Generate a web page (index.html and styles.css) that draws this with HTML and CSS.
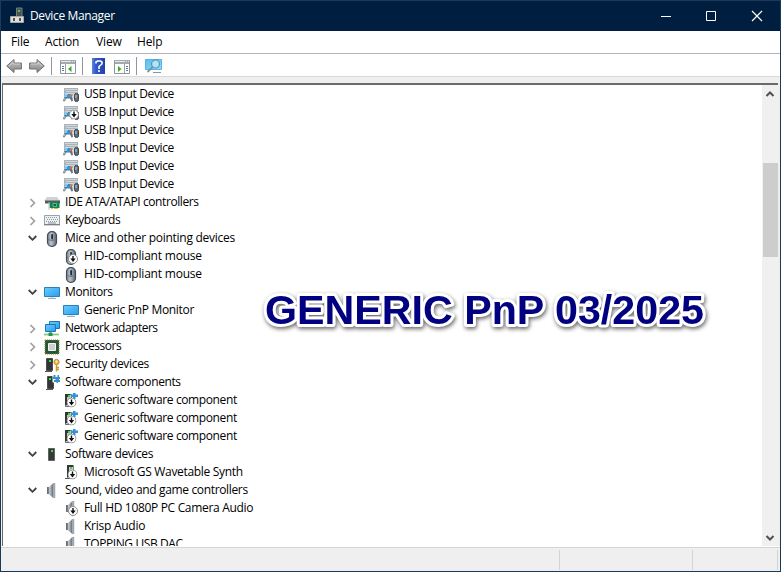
FILE: index.html
```html
<!DOCTYPE html>
<html lang="en">
<head>
<meta charset="utf-8">
<title>Device Manager</title>
<link rel="stylesheet" href="styles.css">
</head>
<body>
<svg class="defs" aria-hidden="true">
  <defs>
    <linearGradient id="blue" x1="0" y1="0" x2="1" y2="1"><stop offset="0" stop-color="#6ccbff"/><stop offset="1" stop-color="#2a9df0"/></linearGradient>
    <linearGradient id="pale" x1="0" y1="0" x2="1" y2="1"><stop offset="0" stop-color="#55bdf2"/><stop offset="1" stop-color="#8fdcfb"/></linearGradient>
    <linearGradient id="steel" x1="0" x2="1"><stop offset="0" stop-color="#75818d"/><stop offset=".4" stop-color="#bcc6d0"/><stop offset="1" stop-color="#59646f"/></linearGradient>
    <linearGradient id="arrow" x1="0" y1="0" x2="0" y2="1"><stop offset="0" stop-color="#c4c4c4"/><stop offset="1" stop-color="#858585"/></linearGradient>
    <linearGradient id="help" x1="0" x2="1"><stop offset="0" stop-color="#5f83e0"/><stop offset=".3" stop-color="#3059cb"/><stop offset="1" stop-color="#2042aa"/></linearGradient>
    <linearGradient id="cone" x1="0" x2="1"><stop offset="0" stop-color="#d4d8dc"/><stop offset=".6" stop-color="#8b9399"/><stop offset="1" stop-color="#5d656c"/></linearGradient>
    <symbol id="down" viewBox="0 0 10 10"><circle cx="5" cy="5" r="4.500" fill="#fff" stroke="#8c8c8c"/><path d="M4.300 2h1.400v2.500h2L5 8 2.300 4.500h2z" fill="#111"/></symbol>
    <symbol id="hid" viewBox="0 0 16 16">
      <path d="M1 1h14v8H1z" fill="#a9b3bb"/><path d="M2.500 2.500h12M3.500 4.500h11M2.500 6.500h12" stroke="#f4f6f7" stroke-dasharray="1 1"/>
      <path d="M2 8q3-2 7 0l1 6-1.500.5L7 11.500H3.500L1.500 14.500 0 14z" fill="#66727d"/><path d="M2 7h3v3H2z" fill="#7acdf6"/><path d="M4 8h3v3H4z" fill="#2097e8"/><path d="M7 7h1.500v3H7z" fill="#ed7545"/><path d="M1 11h1.500v2.500H1z" fill="#a5b2bc"/>
      <rect x="11.500" y="6.500" width="4" height="8" rx="1.800" fill="#646b72" stroke="#3d444a"/><path d="M13 8v3" stroke="#d2d7da"/><path d="M10.500 7v5" stroke="#d5dadd"/>
    </symbol>
    <symbol id="ide" viewBox="0 0 16 16"><path d="M3 2h10l3 4H0z" fill="#cfd3d5"/><path d="M1 5.500h15v3H1z" fill="#53595e"/><path d="M5.500 7h10v6h-10z" fill="#168351"/><path d="M9 8.500h3.500v3H9z" fill="#1d6142" stroke="#86d0a7" stroke-width=".7"/><path d="M5 7v8" stroke="#bfc4c7"/><path d="M7 13.500h2M10 13.500h4" stroke="#d6b757"/></symbol>
    <symbol id="keyboard" viewBox="0 0 16 16"><path d="M.5 2.500h15v9H.5z" fill="#edf0f2" stroke="#98a3ab"/><path d="M2 4.500h12M3 6.500h11M2 8.500h12" stroke="#929ca4" stroke-dasharray="1 1"/><path d="M4 10h8" stroke="#87929a"/><path d="M0 11.800h16" stroke="#69737b"/></symbol>
    <symbol id="mouse" viewBox="0 0 16 16"><rect x="3.500" y=".6" width="9" height="14.800" rx="4.200" fill="url(#steel)" stroke="#444d56" stroke-width="1.200"/><path d="M4 8.500q4 2 8 0" stroke="#6b7680" fill="none"/><rect x="7.200" y="3" width="1.800" height="5.500" rx=".9" fill="#252c32"/></symbol>
    <symbol id="monitor" viewBox="0 0 16 16"><path d="M.5 2.500h15v9H.5z" fill="url(#blue)" stroke="#2880b9"/><path d="M6 12h4v1H6z" fill="#dce4e9"/><path d="M4 13.500h8" stroke="#9cabb4"/></symbol>
    <symbol id="network" viewBox="0 0 16 16"><path d="M5.500.5h10v7h-10z" fill="url(#blue)" stroke="#1c75b2"/><path d="M1.500 3.500h10v7h-10z" fill="url(#blue)" stroke="#1c75b2"/><path d="M5 11h3v1H5z" fill="#9caab3"/><path d="M0 13.500h15" stroke="#7fcb92" stroke-width="1.800"/><path d="M4.500 12h4v3h-4z" fill="#259653"/></symbol>
    <symbol id="cpu" viewBox="0 0 16 16"><path d="M1 1h14v14H1z" fill="#24583c"/><path d="M.7 1v14M15.300 1v14M1 .7h14M1 15.300h14" stroke="#d2bd63" stroke-width="1.200" stroke-dasharray="1 1"/><path d="M4.500 4.500h7v7h-7z" fill="#d0d0ce" stroke="#f5f5f5"/></symbol>
    <symbol id="tower" viewBox="0 0 16 16"><path d="M4.500 1.500h6v12h-6z" fill="#37393a" stroke="#606263"/><path d="M7 3h2v2H7z" fill="#28e83c"/></symbol>
    <symbol id="security" viewBox="0 0 16 16"><path d="M2.500 1.500h6v12h-6z" fill="#333536" stroke="#4b4d4e"/><path d="M1 14.500h7" stroke="#555"/><path d="M5 3h2v2H5z" fill="#28e83c"/><circle cx="12.500" cy="5" r="2.600" fill="#f4c263" stroke="#b98428"/><path d="M12.500 7.500v7M13 10.500h2M13 12.500h2" stroke="#cf982e" stroke-width="1.500"/><circle cx="12.500" cy="4.500" r=".8" fill="#fff"/></symbol>
    <symbol id="component" viewBox="0 0 16 16"><path d="M3.500 1.500h6v12h-6z" fill="#333536" stroke="#4b4d4e"/><path d="M2 14.500h7" stroke="#555"/><path d="M5 3h2v2H5z" fill="#28e83c"/><path d="M8.500-.5h7.500v8H8.500z" fill="#fff"/><path d="M9.500 0h2v2h2V0h1.500v2h1v2h-1v1h1v2h-2v1h-1.500V7h-2.500V5h1.500V4H9V2h.5z" fill="#3a91cc"/></symbol>
    <symbol id="compdown" viewBox="0 0 16 16"><path d="M2.500 1.500h6v12h-6z" fill="#c3c5c5" stroke="#6a6c6c"/><path d="M2 1h5v3H4v8H2z" fill="#343637"/><path d="M5 2h2v2H5z" fill="#28e83c"/><path d="M10-.5h2.500v2H15v2.500h-2.500v2H10V4H8V1.500h2z" fill="#3394d5"/><use href="#down" x="3.500" y="4.500" width="10" height="10"/></symbol>
    <symbol id="synth" viewBox="0 0 16 16"><path d="M4.500.5h6v13h-6z" fill="#cdcfcf" stroke="#868888"/><path d="M4 0h6v2H6v10H4z" fill="#343637"/><path d="M7 2h2v2H7z" fill="#28e83c"/><path d="M2 13.500h4" stroke="#555"/><use href="#down" x="4.500" y="4.500" width="10" height="10"/></symbol>
    <symbol id="speaker" viewBox="0 0 16 16"><path d="M3 4h2v7H3z" fill="#65717a"/><path d="M5 4.500L9.500 0v15L5 11z" fill="url(#cone)" stroke="#a1a9ae" stroke-width=".6"/><path d="M10.500 0v15" stroke="#9fa7ad" stroke-width="1.500"/></symbol>
    <symbol id="open" viewBox="0 0 10 8"><path d="M.7 2l3.800 3.800L8.300 2" fill="none" stroke="#404040" stroke-width="1.800"/></symbol>
    <symbol id="closed" viewBox="0 0 8 10"><path d="M1.500 1l4 4-4 4" fill="none" stroke="#a0a0a0" stroke-width="1.700"/></symbol>
    <symbol id="back" viewBox="0 0 16 16"><path d="M.7 8L8 1.500V5h7.400v6H8v3.500z" fill="url(#arrow)" stroke="#707070" stroke-linejoin="round"/><path d="M3 8l4-3.500V6h7" fill="none" stroke="#ddd" opacity=".7"/></symbol>
  </defs>
</svg>
<main class="window">
  <header class="titlebar">
    <svg class="app-icon" viewBox="0 0 14 17"><path d="M6.500 1h5.500v9H6.500z" fill="#4c5152" stroke="#777b7c"/><path d="M8 3h2v2H8z" fill="#30dc57"/><path d="M.5 9.500h13v6H.5z" fill="#deddda" stroke="#a5a5a3"/><path d="M3 11h2v3H3zM9 11h2v3H9z" fill="#4c5355"/></svg>
    <h1>Device Manager</h1>
    <div class="controls">
      <svg viewBox="0 0 12 12"><path d="M2 6.500h10" stroke="#fff"/></svg>
      <svg viewBox="0 0 12 12"><path d="M1.500 1.500h9v9h-9z" fill="none" stroke="#fff"/></svg>
      <svg viewBox="0 0 12 12"><path d="M1 1l10 10M11 1L1 11" stroke="#fff" stroke-width="1.200"/></svg>
    </div>
  </header>
  <nav class="menu"><span class="m1">File</span><span class="m2">Action</span><span class="m3">View</span><span class="m4">Help</span></nav>
  <div class="toolbar">
    <svg class="back" viewBox="0 0 16 16"><use href="#back"/></svg>
    <svg class="forward" viewBox="0 0 16 16"><use href="#back"/></svg>
    <i></i>
    <svg class="pane" viewBox="0 0 16 15"><path d="M.5 1.500h15v13H.5z" fill="#fff" stroke="#8d949b"/><path d="M1 1h14v4H1z" fill="#a3a9af"/><path d="M1 2.500h10M12 2.500h1M14 2.500h1" stroke="#e7ebee"/><path d="M5.500 5v9" stroke="#9aa2a9"/><path d="M2 7.500h2M2 9.500h2M2 11.500h2" stroke="#52789b"/><path d="M11.500 7v6L8 10z" fill="#35ad24"/></svg>
    <i></i>
    <svg class="help" viewBox="0 0 13 16"><path d="M0 0h13v16H0z" fill="url(#help)"/><path d="M4 5.500V4l1.500-1h3L10 4v2L7 8.500V11M7 12v2" fill="none" stroke="#fff" stroke-width="1.600"/></svg>
    <svg class="pane second" viewBox="0 0 16 15"><path d="M.5 1.500h15v13H.5z" fill="#fff" stroke="#8d949b"/><path d="M1 1h14v4H1z" fill="#a3a9af"/><path d="M1 2.500h10M12 2.500h1M14 2.500h1" stroke="#e7ebee"/><path d="M10.500 5v9" stroke="#9aa2a9"/><path d="M12 7.500h2M12 9.500h2M12 11.500h2" stroke="#52789b"/><path d="M4 7v6l3.500-3z" fill="#35ad24"/></svg>
    <i></i>
    <svg class="scan" viewBox="0 0 17 16"><path d="M.5 1.500h16v10H.5z" fill="url(#pale)" stroke="#5bb0dc"/><path d="M8 14.500h8" stroke="#8298a6"/><circle cx="10.500" cy="6" r="4" fill="#b4e8ff" fill-opacity=".85" stroke="#6292aa" stroke-width="1.200"/><path d="M7.500 9l-5 5" stroke="#7f929c" stroke-width="1.800"/></svg>
  </div>
  <section class="panel">
    <ul class="tree">
      <li class="child usb"><svg><use href="#hid"/></svg><span>USB Input Device</span></li>
      <li class="child usb"><svg viewBox="0 0 16 16"><use href="#hid"/><use href="#down" x="6" y="4.500" width="10" height="10"/></svg><span>USB Input Device</span></li>
      <li class="child usb"><svg><use href="#hid"/></svg><span>USB Input Device</span></li>
      <li class="child usb"><svg><use href="#hid"/></svg><span>USB Input Device</span></li>
      <li class="child usb"><svg><use href="#hid"/></svg><span>USB Input Device</span></li>
      <li class="child usb"><svg><use href="#hid"/></svg><span>USB Input Device</span></li>
      <li class="ide"><svg class="closed"><use href="#closed"/></svg><svg><use href="#ide"/></svg><span>IDE ATA/ATAPI controllers</span></li>
      <li class="keys"><svg class="closed"><use href="#closed"/></svg><svg><use href="#keyboard"/></svg><span>Keyboards</span></li>
      <li class="mice"><svg class="open"><use href="#open"/></svg><svg><use href="#mouse"/></svg><span>Mice and other pointing devices</span></li>
      <li class="child hidm"><svg viewBox="0 0 16 16"><use href="#mouse"/><use href="#down" x="5" y="5" width="10" height="10"/></svg><span>HID-compliant mouse</span></li>
      <li class="child hidm"><svg><use href="#mouse"/></svg><span>HID-compliant mouse</span></li>
      <li class="mons"><svg class="open"><use href="#open"/></svg><svg><use href="#monitor"/></svg><span>Monitors</span></li>
      <li class="child pnp"><svg><use href="#monitor"/></svg><span>Generic PnP Monitor</span></li>
      <li class="net"><svg class="closed"><use href="#closed"/></svg><svg><use href="#network"/></svg><span>Network adapters</span></li>
      <li class="proc"><svg class="closed"><use href="#closed"/></svg><svg><use href="#cpu"/></svg><span>Processors</span></li>
      <li class="sec"><svg class="closed"><use href="#closed"/></svg><svg><use href="#security"/></svg><span>Security devices</span></li>
      <li class="comps"><svg class="open"><use href="#open"/></svg><svg><use href="#component"/></svg><span>Software components</span></li>
      <li class="child gen"><svg><use href="#compdown"/></svg><span>Generic software component</span></li>
      <li class="child gen"><svg><use href="#compdown"/></svg><span>Generic software component</span></li>
      <li class="child gen"><svg><use href="#compdown"/></svg><span>Generic software component</span></li>
      <li class="soft"><svg class="open"><use href="#open"/></svg><svg><use href="#tower"/></svg><span>Software devices</span></li>
      <li class="child gs"><svg><use href="#synth"/></svg><span>Microsoft GS Wavetable Synth</span></li>
      <li class="sound"><svg class="open"><use href="#open"/></svg><svg><use href="#speaker"/></svg><span>Sound, video and game controllers</span></li>
      <li class="child full"><svg viewBox="0 0 16 16"><use href="#speaker"/><use href="#down" x="5" y="5" width="10" height="10"/></svg><span>Full HD 1080P PC Camera Audio</span></li>
      <li class="child krisp"><svg><use href="#speaker"/></svg><span>Krisp Audio</span></li>
      <li class="child topping"><svg><use href="#speaker"/></svg><span>TOPPING USB DAC</span></li>
    </ul>
    <div class="scroll"><svg viewBox="0 0 10 8"><path d="M1.500 6L5 2.500 8.500 6" fill="none" stroke="#505050" stroke-width="2"/></svg><b></b><svg viewBox="0 0 10 8"><path d="M1.500 2L5 5.500 8.500 2" fill="none" stroke="#505050" stroke-width="2"/></svg></div>
  </section>
  <footer><span></span><span></span><span></span></footer>
  <svg class="caption" viewBox="0 0 460 60"><text x="10" y="43.500" textLength="439" lengthAdjust="spacingAndGlyphs">GENERIC PnP 03/2025</text></svg>
</main>
</body>
</html>
```

FILE: styles.css
```css
* { box-sizing: border-box; }
body { margin: 0; font: 12px/18px "Open Sans", "Noto Sans", sans-serif; color: #000; background: #efefef; }
.defs { position: absolute; width: 0; height: 0; }
svg { display: block; flex-shrink: 0; }
.window { position: relative; width: 781px; height: 572px; overflow: hidden; border: 1px solid #1b3a5a; display: flex; flex-direction: column; background: #efefef; }
.titlebar { height: 30px; flex: none; background: #001f40; color: #fff; display: flex; align-items: center; padding-left: 9px; }
.app-icon { width: 14px; height: 17px; margin-top: -1px; }
h1 { font: inherit; margin: 0 auto 0 6px; letter-spacing: -.36px; }
.controls { display: flex; gap: 34px; padding-right: 17px; }
.controls svg { width: 12px; height: 12px; }
.menu { height: 23px; flex: none; display: flex; padding: 2px 0 0 10px; background: #fff; border-bottom: 1px solid #b1b5c0; }
.menu span { white-space: nowrap; letter-spacing: -.15px; }
.m1 { width: 34px; } .m2 { width: 51px; } .m3 { width: 41px; } .m4 { width: 30px; }
.toolbar { height: 23px; flex: none; background: #fff; border-bottom: 1px solid #d9d9d9; display: flex; align-items: center; padding: 2px 0 0 5px; }
.toolbar i { width: 1px; height: 18px; background: #969696; }
.back, .forward { width: 16px; height: 16px; }
.forward { margin: 0 6px 0 7px; transform: scaleX(-1); }
.pane { width: 16px; height: 15px; margin: 1px 6px 0 8px; }
.help { width: 13px; height: 16px; margin-left: 9px; }
.pane.second { margin: 1px 6px 0 9px; }
.scan { width: 17px; height: 16px; margin-left: 8px; }
.panel { margin: 6px 2px 0 1px; height: 463px; flex: none; border-top: 2px solid #6a6a6a; border-left: 1px solid #6a6a6a; background: #fff; display: flex; overflow: hidden; }
.tree { list-style: none; margin: 0; padding: 0; flex: 1; }
.tree li { display: flex; align-items: center; height: 18px; padding-left: 25px; white-space: nowrap; letter-spacing: -.35px; }
.tree li.child { padding-left: 60px; }
.tree .usb, .tree .comps, .tree .gen, .tree .soft { letter-spacing: -.38px; }
.tree .ide, .tree .topping { letter-spacing: -.4px; }
.tree .keys { letter-spacing: -.45px; }
.tree .mice, .tree .krisp { letter-spacing: -.26px; }
.tree .hidm { letter-spacing: -.21px; }
.tree .net, .tree .proc { letter-spacing: -.5px; }
.tree .pnp, .tree .sec, .tree .gs, .tree .full { letter-spacing: -.32px; }
.tree svg { width: 16px; height: 16px; margin-right: 5px; margin-top: 1px; }
.tree svg.open { width: 10px; height: 8px; margin: 0 6px 0 0; }
.tree svg.closed { width: 8px; height: 10px; margin: 2px 7px 0 1px; }
.scroll { width: 16px; background: #f0f0f0; display: flex; flex-direction: column; align-items: center; padding: 5px 0 4px; }
.scroll svg { width: 10px; height: 8px; }
.scroll b { width: 15px; height: 94px; background: #cdcdcd; margin: 65px 0 auto; }
footer { flex: 1; border-top: 1px solid #d4d4d4; margin-top: 1px; padding: 2px 2px 1px 0; display: flex; box-shadow: 0 -1px #fff; }
footer span { border-right: 1px solid #d3d3d3; width: 133px; flex: none; }
footer span:first-child { width: 559px; }
footer span:last-child { width: 85px; }
.caption { position: absolute; left: 254px; top: 279px; width: 460px; height: 60px; }
.caption text { font: bold 41px "Liberation Sans", sans-serif; fill: #000080; stroke: #fff; stroke-width: 6px; stroke-linejoin: round; paint-order: stroke; filter: drop-shadow(1px 2px 2px #0009); }
```
